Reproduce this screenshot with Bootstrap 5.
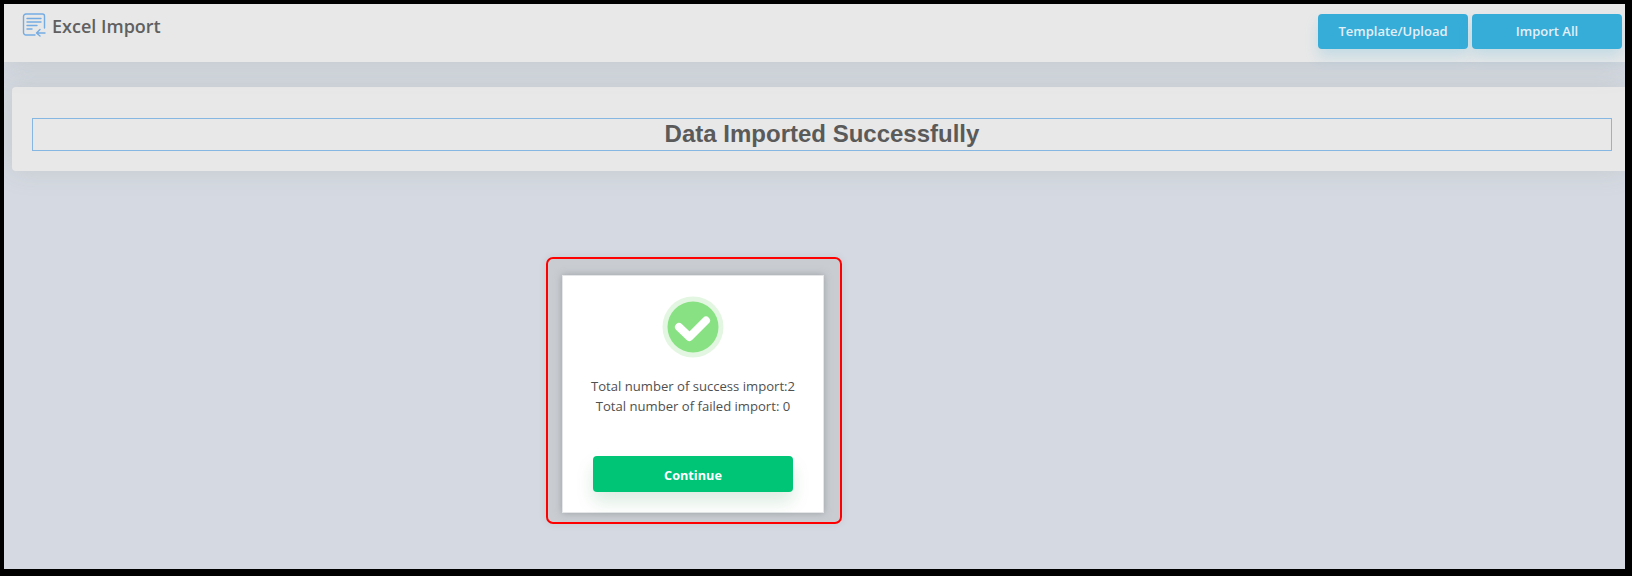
<!DOCTYPE html>
<html lang="en">
<head>
  <meta charset="UTF-8" />
  <meta name="viewport" content="width=device-width, initial-scale=1.0"/>
  <title>Excel Import</title>
  <link href="https://cdn.jsdelivr.net/npm/bootstrap@5.3.3/dist/css/bootstrap.min.css" rel="stylesheet">
  <style>
    html, body { height: 100%; }
    body { background: #000; padding: 4px 7px 7px 4px; overflow: hidden; font-family: "Open Sans", sans-serif; }
    .frame { height: 565px; background: #d5dae2; overflow: hidden; }
    .top-bar { height: 58px; background: #e8e8e8; padding: 10px 3px 0 18px; position: relative; box-shadow: 0 2px 30px rgba(130,140,130,.22); }
    .page-title { font-size: 18px; font-weight: 600; color: #606060; line-height: 24px; }
    .title-icon { width: 24px; height: 24px; margin-right: 6px; margin-top: -1px; }
    .head-btn { height: 35px; background: #36acd9; color: #e3f0f6; border: 0; border-radius: 4px; font-size: 13px; font-weight: 600; padding: 0; box-shadow: 0 8px 14px rgba(54,172,217,.2); }
    .head-btn.upload { width: 150px; }
    .head-btn.import-all { width: 150px; }
    .status-panel { margin: 25px 0 0 8px; height: 84px; background: #e8e8e8; border-radius: 4px 0 0 4px; padding: 31px 13px 0 20px; box-shadow: 0 0 26px rgba(130,140,130,.2); }
    .status-box { height: 33px; border: 1px solid #86b7e3; text-align: center; font-family: "Liberation Sans", sans-serif; font-weight: 700; font-size: 24px; line-height: 29px; color: #5a5a5a; }
    .marked { width: 296px; height: 267px; margin: 86px 0 0 542px; border: 2px solid #f00; border-radius: 7px; background: #c9cdd2; padding: 16px 15px 9px 14px; box-shadow: 0 0 8px rgba(0,0,0,.08); }
    .result-card { width: 262px; height: 238px; background: #fff; border: 1px solid #e4e6e8; box-shadow: 0 0 7px rgba(110,115,122,.5); padding-top: 20px; }
    .check-icon { width: 62px; height: 62px; display: block; margin: 0 auto; }
    .result-text { margin: 18px 0 0; font-size: 13.1px; line-height: 20px; color: #505050; text-align: center; }
    .continue-btn { display: block; width: 200px; height: 36px; margin: 40px 0 0 30px; background: #00c476; color: #fff; border: 0; border-radius: 4px; font-size: 12.7px; font-weight: 700; padding: 3px 0 0; box-shadow: 0 10px 18px rgba(0,120,40,.14); }
  </style>
</head>
<body>

  <div class="frame">
    <div class="top-bar d-flex justify-content-between align-items-start">
      <div class="d-flex align-items-start">
        <svg class="title-icon" viewBox="0 0 24 24" fill="none" stroke="#74abe2" stroke-width="1.4" stroke-linecap="round" stroke-linejoin="round">
          <path d="M13 22H4a2.5 2.5 0 0 1-2.5-2.5V3.500A2.500 2.500 0 0 1 4 1h16.500A2 2 0 0 1 22.500 3v12"/>
          <path d="M5 5.500h14M5 9h14M5 12.500h10M5 16h5"/>
          <path d="M23 20h-8.500M18 16.500 14.500 20l3.500 3"/>
        </svg>
        <span class="page-title">Excel Import</span>
      </div>
      <div class="d-flex gap-1">
        <button type="button" class="btn head-btn upload">Template/Upload</button>
        <button type="button" class="btn head-btn import-all">Import All</button>
      </div>
    </div>

    <div class="status-panel">
      <div class="status-box">Data Imported Successfully</div>
    </div>

    <div class="marked">
      <div class="result-card">
        <svg class="check-icon" viewBox="0 0 62 62">
          <circle cx="31" cy="31" r="30.500" fill="#e3f6e1"/>
          <circle cx="31" cy="31" r="25.500" fill="#88e283"/>
          <path d="M17 31 27.500 41 44 24.500" fill="none" stroke="#fff" stroke-width="8" stroke-linecap="round" stroke-linejoin="round"/>
        </svg>
        <p class="result-text">Total number of success import:2<br>Total number of failed import: 0</p>
        <button type="button" class="btn continue-btn">Continue</button>
      </div>
    </div>
  </div>

</body>
</html>
